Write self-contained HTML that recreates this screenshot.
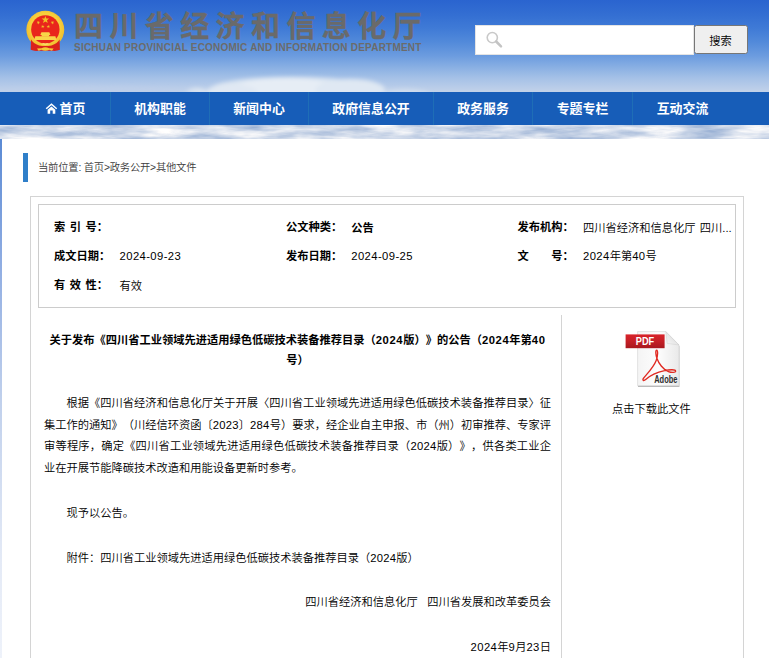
<!DOCTYPE html>
<html lang="zh-CN">
<head>
<meta charset="utf-8">
<title>四川省经济和信息化厅</title>
<style>
*{box-sizing:border-box;margin:0;padding:0}
html,body{width:769px;height:658px;overflow:hidden}
body{font-family:"Liberation Sans","Noto Sans CJK SC",sans-serif;font-size:11.25px;font-weight:350;color:#000;position:relative;text-spacing-trim:space-all;
background:linear-gradient(180deg,#5a8ad4 139px,#8eace2 260px,#c0d0ec 400px,#e4eaf6 560px,#eef2fa 658px)}
.abs{position:absolute;white-space:nowrap}
.n{letter-spacing:.4px}
h1 .n,.lb .n{letter-spacing:.6px}
p .n{letter-spacing:.25px}
p.r .n{letter-spacing:.4px}
#sky{position:absolute;left:0;top:0;width:769px;height:139px}
#title{left:74px;top:8.7px;font-size:29px;letter-spacing:6.4px;color:#6a6a6a;font-weight:700;line-height:36px;-webkit-text-stroke:.35px #6a6a6a}
#sub{left:74px;top:42px;font-size:10px;letter-spacing:.22px;font-weight:700;color:#6b6b6b;line-height:12px}
#search{position:absolute;left:475px;top:25px;width:219px;height:30px;background:#fff;border:1px solid #e4e4e4}
#sbtn{position:absolute;left:693.5px;top:25.3px;width:54px;height:29.2px;background:#efefef;border:1px solid #767676;border-radius:2.5px;font-size:11.25px;line-height:30.4px;text-align:center;color:#000}
#nav{position:absolute;left:0;top:92px;width:769px;height:33px;background:#175db8}
#nav span{position:absolute;top:0;height:33px;line-height:33.6px;color:#fff;font-weight:700;font-size:12.9px;text-align:center;border-right:1px solid #1f6eb6;white-space:nowrap}
#main{position:absolute;left:2px;top:139px;width:767px;height:519px;background:#fff}
#bar{position:absolute;left:23px;top:153px;width:5px;height:28.5px;background:#2f7fc9}
#crumb{left:38px;top:159.8px;font-size:10.3px;letter-spacing:-.2px;color:#3c3c3c;line-height:16px}
#outer{position:absolute;left:30px;top:196px;width:714px;height:480px;border:1px solid #d4d4d4}
#info{position:absolute;left:38px;top:204px;width:698px;height:104px;border:1px solid #ccc}
.lb{position:absolute;font-weight:700;line-height:16px;white-space:nowrap}
.vl{position:absolute;line-height:16px;white-space:nowrap}
#divider{position:absolute;left:561px;top:315px;width:1px;height:343px;background:#d4d4d4}
#art{position:absolute;left:44px;top:330px;width:507px}
#art h1{font-size:11.25px;font-weight:700;line-height:19.2px;text-align:center;white-space:nowrap;margin-top:1.4px}
#art p{line-height:21.6px;text-indent:22.5px;text-align:justify;position:absolute;left:0;width:507px;white-space:nowrap}
#art p.r{text-align:right;text-indent:0}
#art p i{font-style:normal;display:block;text-align-last:justify;text-indent:0}
#art p i.f{text-indent:22.5px}
#cap{left:561.3px;width:180px;top:401.4px;text-align:center;line-height:16px}
</style>
</head>
<body>
<svg id="sky" viewBox="0 0 769 139" preserveAspectRatio="none">
<defs>
<linearGradient id="sg" x1="0" y1="0" x2="0" y2="1"><stop offset="0.0000" stop-color="#2a64cf"/><stop offset="0.1007" stop-color="#336ed2"/><stop offset="0.2014" stop-color="#3f7ad6"/><stop offset="0.3022" stop-color="#528ada"/><stop offset="0.4029" stop-color="#6c9cdf"/><stop offset="0.5036" stop-color="#90b4e4"/><stop offset="0.5612" stop-color="#a5c1e7"/><stop offset="0.6259" stop-color="#b8cce9"/><stop offset="0.6619" stop-color="#c2d2e9"/><stop offset="0.8993" stop-color="#cdd8e8"/><stop offset="1.0000" stop-color="#d6dde8"/></linearGradient>
<filter id="bl" x="-20%" y="-80%" width="140%" height="260%"><feGaussianBlur stdDeviation="2.2"/></filter>
<filter id="bl2" x="-20%" y="-80%" width="140%" height="260%"><feGaussianBlur stdDeviation="1.6"/></filter>
<filter id="cl" x="0" y="0" width="100%" height="100%" color-interpolation-filters="sRGB"><feTurbulence type="fractalNoise" baseFrequency="0.022 0.11" numOctaves="4" seed="11"/><feColorMatrix type="matrix" values="0.62 0 0 0 0.50  0.47 0 0 0 0.615  0.25 0 0 0 0.79  0 0 0 0 1"/></filter>
<clipPath id="c1"><rect width="769" height="92"/></clipPath>
<clipPath id="c2"><rect y="125" width="769" height="14"/></clipPath>
</defs>
<rect width="769" height="139" fill="url(#sg)"/>
<g clip-path="url(#c1)"><g filter="url(#bl)">
<ellipse cx="292" cy="91" rx="84" ry="14" fill="#dce6f2"/>
<ellipse cx="285" cy="89" rx="52" ry="11" fill="#e6edf5"/>
<ellipse cx="350" cy="90" rx="35" ry="11" fill="#dfe8f3"/>
<ellipse cx="232" cy="93" rx="26" ry="9" fill="#e0e8f3"/>
<ellipse cx="197" cy="95" rx="12" ry="7" fill="#dbe5f1"/>
<ellipse cx="405" cy="96" rx="26" ry="7" fill="#d0ddee"/>
<ellipse cx="90" cy="97" rx="115" ry="10" fill="#bccde8" opacity=".75"/>
</g></g>
<rect y="125" width="769" height="14" fill="#d3dbe7" filter="url(#cl)"/>
</svg>
<svg id="emb" style="position:absolute;left:20px;top:5px" width="50" height="52" viewBox="20 5 50 52">
<defs><filter id="eb" x="-10%" y="-10%" width="120%" height="120%"><feGaussianBlur stdDeviation="0.35"/></filter>
<radialGradient id="gg" cx="0.5" cy="0.45" r="0.55"><stop offset="0.7" stop-color="#f7cf3c"/><stop offset="1" stop-color="#eeb92a"/></radialGradient></defs>
<g filter="url(#eb)">
<circle cx="45.3" cy="29.65" r="18.95" fill="url(#gg)"/>
<circle cx="45.35" cy="29.4" r="14.2" fill="#e9281f"/>
<path d="M31 39.6 L30.7 49.8 Q34 51.3 38 50.8 L52.6 50.8 Q56.6 51.3 59.9 49.8 L59.6 39.6 Q57.5 43.6 51.5 45.4 Q45.3 46.8 39.1 45.4 Q33.1 43.6 31 39.6 Z" fill="#da231d"/>
<path d="M37 48.6 L41.5 48.2 Q45.3 46.2 49.1 48.2 L53.6 48.6 L52 50.7 L49.3 49.8 Q45.3 51.6 41.3 49.8 L38.6 50.7 Z" fill="#f4c936"/>
<g fill="#f8d548">
<path d="M40.3 35.1 L41.4 32.2 L49.3 32.2 L50.4 35.1 Z"/>
<rect x="41.6" y="34.8" width="7.5" height="1.8"/>
<path d="M34.3 40 L35.3 36.2 L55.4 36.2 L56.4 40 Z"/>
</g>
<g fill="#f1c025">
<polygon points="45.40,15.90 46.36,18.47 49.11,18.59 46.96,20.31 47.69,22.96 45.40,21.44 43.11,22.96 43.84,20.31 41.69,18.59 44.44,18.47"/><polygon points="39.20,21.04 38.99,22.29 40.06,22.97 38.81,23.16 38.49,24.39 37.92,23.25 36.66,23.33 37.56,22.44 37.10,21.26 38.22,21.85"/><polygon points="51.60,21.04 52.58,21.85 53.70,21.26 53.24,22.44 54.14,23.33 52.88,23.25 52.31,24.39 51.99,23.16 50.74,22.97 51.81,22.29"/><polygon points="43.01,24.83 43.24,26.07 44.48,26.35 43.37,26.95 43.49,28.22 42.57,27.34 41.41,27.85 41.95,26.71 41.11,25.75 42.37,25.92"/><polygon points="48.09,24.83 48.73,25.92 49.99,25.75 49.15,26.71 49.69,27.85 48.53,27.34 47.61,28.22 47.73,26.95 46.62,26.35 47.86,26.07"/>
</g>
<path d="M40.4 44.6 Q42.8 42.2 45.3 43.6 Q47.8 42.2 50.2 44.6 Q47.8 44 45.3 45.2 Q42.8 44 40.4 44.6 Z" fill="#f9dc68"/>
</g>
</svg>
<div class="abs" id="title">四川省经济和信息化厅</div>
<div class="abs" id="sub">SICHUAN PROVINCIAL ECONOMIC AND INFORMATION DEPARTMENT</div>
<div id="search"></div>
<svg style="position:absolute;left:483px;top:29px" width="24" height="22" viewBox="483 29 24 22"><circle cx="492.3" cy="37.6" r="5.1" fill="none" stroke="#c9c9c9" stroke-width="1.6"/><path d="M496.2 41.5 L501 46.3" stroke="#c4c4c4" stroke-width="2.5" stroke-linecap="round"/></svg>
<div id="sbtn">搜索</div>
<div id="nav">
<span style="left:11px;width:100px;text-align:left;padding-left:48.5px">首页</span>
<span style="left:111px;width:99px">机构职能</span>
<span style="left:210px;width:99px">新闻中心</span>
<span style="left:309px;width:125px">政府信息公开</span>
<span style="left:434px;width:99px">政务服务</span>
<span style="left:533px;width:100px">专题专栏</span>
<span style="left:633px;width:99px;border-right:0">互动交流</span>
</div>
<svg style="position:absolute;left:45px;top:102px" width="13" height="13" viewBox="45 102 13 13"><path d="M46.2 108.8 L51.45 104.2 L56.7 108.8" fill="none" stroke="#fff" stroke-width="1.5" stroke-linejoin="miter"/><path d="M47.6 109.8 L51.45 106.4 L55.3 109.8 L55.3 113.8 L52.7 113.8 L52.7 110.6 L50.2 110.6 L50.2 113.8 L47.6 113.8 Z" fill="#fff"/></svg>
<div id="main"></div>
<div id="bar"></div>
<div class="abs" id="crumb">当前位置: 首页&gt;政务公开&gt;其他文件</div>
<div id="outer"></div>
<div id="info"></div>
<div class="lb" style="left:54px;top:218.9px;word-spacing:1.35px">索 引 号：</div>
<div class="lb" style="left:54px;top:248.1px">成文日期：</div>
<div class="vl" style="left:119.6px;top:248.3px"><span class="n">2024-09-23</span></div>
<div class="lb" style="left:54px;top:277px;word-spacing:1.35px">有 效 性：</div>
<div class="vl" style="left:119.6px;top:277.8px">有效</div>
<div class="lb" style="left:286px;top:218.9px">公文种类：</div>
<div class="lb" style="left:351.3px;top:219.6px">公告</div>
<div class="lb" style="left:286px;top:248.1px">发布日期：</div>
<div class="vl" style="left:351.3px;top:248.3px"><span class="n">2024-09-25</span></div>
<div class="lb" style="left:517.6px;top:218.9px">发布机构：</div>
<div class="vl" style="left:583px;top:219.6px;word-spacing:1.2px">四川省经济和信息化厅 四川...</div>
<div class="lb" style="left:517.6px;top:248.1px">文　　号：</div>
<div class="vl" style="left:583px;top:248.3px"><span class="n">2024</span>年第<span class="n">40</span>号</div>
<div id="divider"></div>
<div id="art">
<h1>关于发布《四川省工业领域先进适用绿色低碳技术装备推荐目录（<span class="n">2024</span>版）》的公告（<span class="n">2024</span>年第<span class="n">40</span><br>号）</h1>
<p style="top:63.3px"><i class="f">根据《四川省经济和信息化厅关于开展〈四川省工业领域先进适用绿色低碳技术装备推荐目录〉征</i><i>集工作的通知》（川经信环资函〔<span class="n">2023</span>〕<span class="n">284</span>号）要求，经企业自主申报、市（州）初审推荐、专家评</i><i>审等程序，确定《四川省工业领域先进适用绿色低碳技术装备推荐目录（<span class="n">2024</span>版）》，供各类工业企</i>业在开展节能降碳技术改造和用能设备更新时参考。</p>
<p style="top:172.6px">现予以公告。</p>
<p style="top:217.7px">附件：四川省工业领域先进适用绿色低碳技术装备推荐目录（<span class="n">2024</span>版）</p>
<p class="r" style="top:261.7px">四川省经济和信息化厅&nbsp;&nbsp; 四川省发展和改革委员会</p>
<p class="r" style="top:306.5px"><span class="n">2024</span>年<span class="n">9</span>月<span class="n">23</span>日</p>
</div>
<svg id="pdf" style="position:absolute;left:620px;top:326px" width="66" height="66" viewBox="620 326 66 66">
<defs>
<linearGradient id="pg" x1="0" y1="0" x2="1" y2="0"><stop offset="0" stop-color="#f4f4f4"/><stop offset="0.5" stop-color="#fdfdfd"/><stop offset="1" stop-color="#e9e9e9"/></linearGradient>
<linearGradient id="rg" x1="0" y1="0" x2="0" y2="1"><stop offset="0" stop-color="#d8232a"/><stop offset="0.5" stop-color="#c51f26"/><stop offset="1" stop-color="#a8181e"/></linearGradient>
<linearGradient id="fg" x1="0" y1="1" x2="1" y2="0"><stop offset="0" stop-color="#fafafa"/><stop offset="1" stop-color="#cfcfcf"/></linearGradient>
<filter id="ps" x="-10%" y="-10%" width="120%" height="125%"><feGaussianBlur stdDeviation="0.7"/></filter>
</defs>
<path d="M638 333 L666 333 L679.4 346.5 L679.4 387 L638 387 Z" fill="#b5b5b5" filter="url(#ps)"/>
<path d="M637.6 331.6 L665.8 331.6 L679 345 L679 385.8 L637.6 385.8 Z" fill="url(#pg)" stroke="#d2d2d2" stroke-width=".6"/>
<path d="M665.8 331.6 L679 345 L667.2 343.4 Z" fill="url(#fg)" stroke="#c8c8c8" stroke-width=".4"/>
<rect x="625.6" y="334.4" width="39" height="13.8" fill="url(#rg)"/>
<text x="645" y="345" font-family="Liberation Sans, sans-serif" font-weight="700" font-size="10" fill="#fff" text-anchor="middle" textLength="18.4" lengthAdjust="spacingAndGlyphs">PDF</text>
<g fill="none" stroke="#e02a22" stroke-linecap="round" stroke-linejoin="round">
<path d="M656.6 350.2 C655.4 350.4 655.6 354.6 657 358.4 C658.6 363 663 369.6 668.4 371.6 C671.6 372.8 675.8 372.8 675.6 371 C675.4 369.4 670 369.4 664.6 370.6 C657.6 372.2 650 375.6 646 379.2 C643.4 381.6 642.2 380.2 643.4 378.4 C646 374.6 653 368.4 656.2 360.4 C658 355.8 658 350 656.6 350.2 Z" stroke-width="1.35"/>
</g>
<text x="654.2" y="383.3" font-family="Liberation Sans, sans-serif" font-weight="700" font-size="10.4" fill="#2e2e2e" textLength="23.2" lengthAdjust="spacingAndGlyphs">Adobe</text>
</svg>
<div class="abs" id="cap">点击下载此文件</div>
</body>
</html>
